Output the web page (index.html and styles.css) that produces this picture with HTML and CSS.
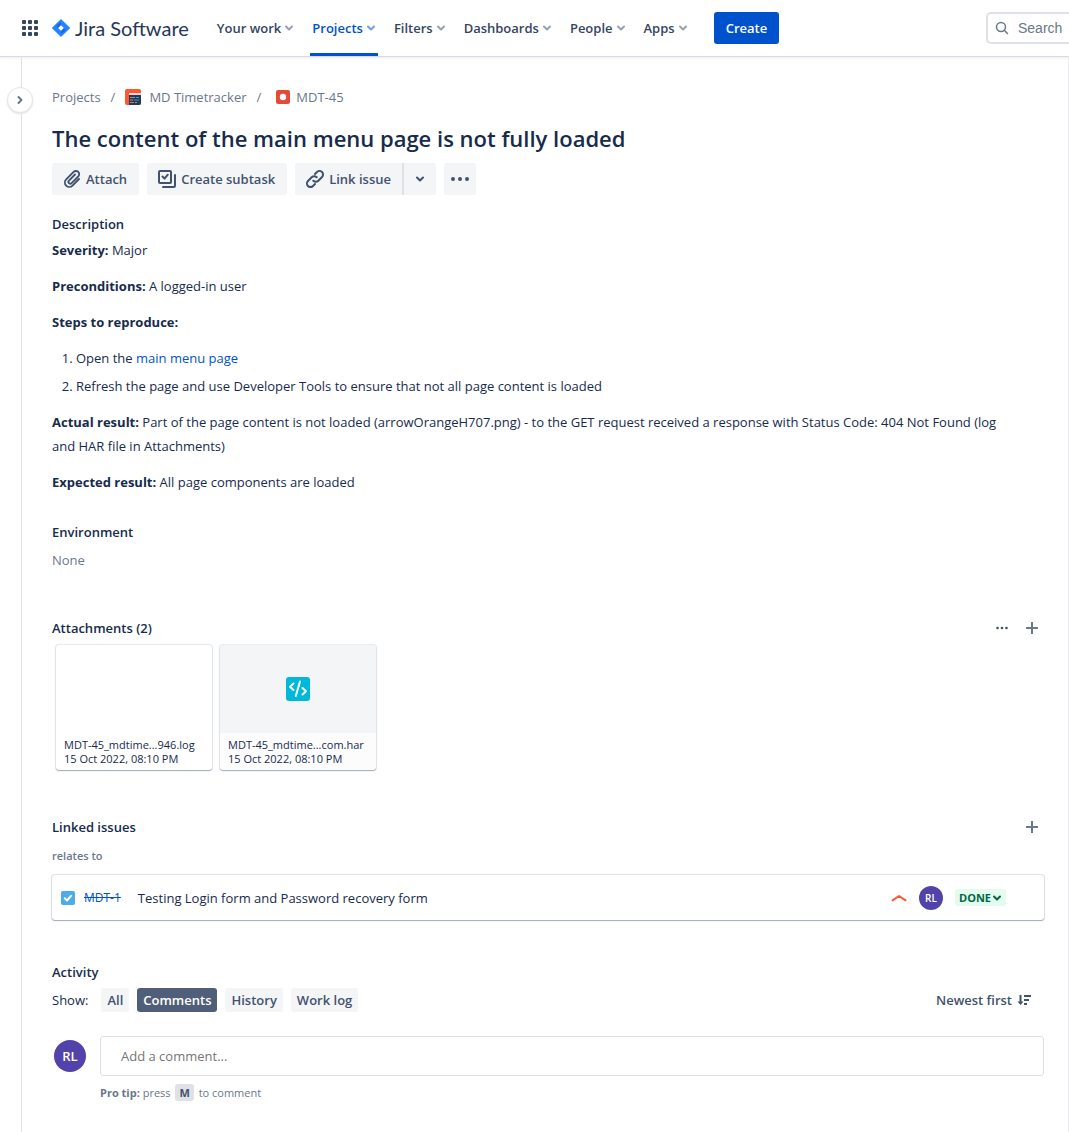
FILE: index.html
```html
<!DOCTYPE html>
<html lang="en">
<head>
<meta charset="utf-8">
<meta name="viewport" content="width=device-width, initial-scale=1">
<title>MDT-45 – Jira Software</title>
<link rel="stylesheet" href="styles.css">
</head>
<body>
<svg class="defs" aria-hidden="true">
  <symbol id="chev" viewBox="0 0 10 10"><path d="M2 3.500 5 6.500 8 3.500" fill="none" stroke="currentColor" stroke-width="2" stroke-linecap="round" stroke-linejoin="round"/></symbol>
  <symbol id="plus" viewBox="0 0 12 12"><path d="M6 0v12M0 6h12" fill="none" stroke="currentColor" stroke-width="2"/></symbol>
</svg>
<header class="topbar">
  <div class="topbar-main">
    <button class="icon-btn switcher" aria-label="Switch to">
      <svg width="16" height="16" viewBox="0 0 16 16" fill="currentColor"><rect width="4" height="4" rx="1"/><rect x="6" width="4" height="4" rx="1"/><rect x="12" width="4" height="4" rx="1"/><rect y="6" width="4" height="4" rx="1"/><rect x="6" y="6" width="4" height="4" rx="1"/><rect x="12" y="6" width="4" height="4" rx="1"/><rect y="12" width="4" height="4" rx="1"/><rect x="6" y="12" width="4" height="4" rx="1"/><rect x="12" y="12" width="4" height="4" rx="1"/></svg>
    </button>
    <a class="logo" href="#">
      <svg width="18" height="18" viewBox="0 0 18 18"><path d="M9 0l8.500 8.200a1.100 1.100 0 0 1 0 1.600L9 18 .5 9.800a1.100 1.100 0 0 1 0-1.600z" fill="#2684ff"/><path d="M9 3v3.300L6.300 9 4.200 6.800z" fill="#1868e0"/><path d="M9 15v-3.300L11.700 9l2.100 2.200z" fill="#1868e0"/><path d="M9 6.200 11.800 9 9 11.800 6.200 9z" fill="#fff"/></svg>
      <span>Jira Software</span>
    </a>
    <nav class="nav" aria-label="Main">
      <button class="nav-item">Your work<svg><use href="#chev"/></svg></button>
      <button class="nav-item is-current">Projects<svg><use href="#chev"/></svg></button>
      <button class="nav-item">Filters<svg><use href="#chev"/></svg></button>
      <button class="nav-item">Dashboards<svg><use href="#chev"/></svg></button>
      <button class="nav-item">People<svg><use href="#chev"/></svg></button>
      <button class="nav-item">Apps<svg><use href="#chev"/></svg></button>
    </nav>
    <button class="create">Create</button>
  </div>
  <label class="search">
    <svg width="14" height="14" viewBox="0 0 14 14" fill="none" stroke="currentColor" stroke-width="1.500" stroke-linecap="round"><circle cx="6" cy="6" r="4.500"/><path d="M9.500 9.500 12.500 12.500"/></svg>
    <input type="text" placeholder="Search" aria-label="Search">
  </label>
</header>

<div class="shell">
  <aside class="rail">
    <button class="expand" aria-label="Expand sidebar"><svg width="10" height="10" viewBox="0 0 10 10"><path d="M3.500 2 6.500 5 3.500 8" fill="none" stroke="currentColor" stroke-width="2" stroke-linecap="round" stroke-linejoin="round"/></svg></button>
  </aside>
  <main class="issue">
    <nav class="crumbs" aria-label="Breadcrumbs">
      <a href="#">Projects</a>
      <span>/</span>
      <a href="#"><svg width="16" height="16" viewBox="0 0 16 16"><rect width="16" height="16" rx="2" fill="#ff5630"/><path d="M4 6h12v8a2 2 0 0 1-2 2H4z" fill="#253858"/><path d="M4 4h12v2H4z" fill="#ffd5c9"/><path d="M5 8.500h5M5 13.500h4" stroke="#8993a4"/><path d="M11 8.500h3M9 11h5" stroke="#2a9fc0"/><path d="M5 11h3M10 13.500h2" stroke="#ff7452"/></svg>MD Timetracker</a>
      <span>/</span>
      <a class="crumb-issue" href="#"><svg width="14" height="14" viewBox="0 0 14 14"><rect width="14" height="14" rx="2" fill="#e5493a"/><circle cx="7" cy="7" r="3.200" fill="#fff"/></svg>MDT-45</a>
    </nav>
    <h1>The content of the main menu page is not fully loaded</h1>
    <div class="actions">
      <button class="btn"><svg width="18" height="18" viewBox="0 0 18 18" fill="none" stroke="currentColor" stroke-width="1.900" stroke-linecap="round"><path d="M12 4.500 6 10.600a1.800 1.800 0 0 0 2.600 2.600L15.200 6.500a3.200 3.200 0 0 0-4.600-4.600L3.200 9.300a4.400 4.400 0 0 0 6.300 6.300L16 9"/></svg>Attach</button>
      <button class="btn"><svg width="18" height="18" viewBox="0 0 18 18" fill="none" stroke="currentColor" stroke-width="2" stroke-linecap="round" stroke-linejoin="round"><rect x="1" y="1" width="12" height="12" rx="1"/><path d="M4.500 6.500 6.500 8.700 9.800 4.700M17 5v10.500a1.500 1.500 0 0 1-1.500 1.500H5"/></svg>Create subtask</button>
      <div class="split">
        <button class="btn"><svg width="18" height="18" viewBox="0 0 18 18" fill="none" stroke="currentColor" stroke-width="2" stroke-linecap="round"><path d="M7.300 10.700a3.500 3.500 0 0 0 5 0L16 7a3.500 3.500 0 0 0-5-5L9 4"/><path d="M10.700 7.300a3.500 3.500 0 0 0-5 0L2 11a3.500 3.500 0 0 0 5 5l2-2"/></svg>Link issue</button>
        <button class="btn square" aria-label="More link options"><svg width="10" height="10"><use href="#chev"/></svg></button>
      </div>
      <button class="btn square" aria-label="More actions"><svg width="18" height="4" viewBox="0 0 18 4" fill="currentColor"><circle cx="2" cy="2" r="2"/><circle cx="9" cy="2" r="2"/><circle cx="16" cy="2" r="2"/></svg></button>
    </div>

    <section class="description">
      <h2>Description</h2>
      <p><strong>Severity:</strong> Major</p>
      <p><strong>Preconditions:</strong> A logged-in user</p>
      <p><strong>Steps to reproduce:</strong></p>
      <ol>
        <li>Open the <a href="#">main menu page</a></li>
        <li>Refresh the page and use Developer Tools to ensure that not all page content is loaded</li>
      </ol>
      <p><strong>Actual result:</strong> Part of the page content is not loaded (arrowOrangeH707.png) - to the GET request received a response with Status Code: 404 Not Found (log and HAR file in Attachments)</p>
      <p><strong>Expected result:</strong> All page components are loaded</p>
    </section>

    <section class="environment">
      <h2>Environment</h2>
      <p>None</p>
    </section>

    <section class="block">
      <div class="block-head">
        <h2>Attachments (2)</h2>
        <button class="icon-btn" aria-label="Attachment options"><svg width="12" height="4" viewBox="0 0 12 4" fill="currentColor"><circle cx="1.500" cy="2" r="1.300"/><circle cx="6" cy="2" r="1.300"/><circle cx="10.500" cy="2" r="1.300"/></svg></button>
        <button class="icon-btn add" aria-label="Add attachment"><svg width="12" height="12"><use href="#plus"/></svg></button>
      </div>
      <div class="files">
        <a class="file" href="#">
          <span class="preview"></span>
          <span class="meta"><span>MDT-45_mdtime...946.log</span><span>15 Oct 2022, 08:10 PM</span></span>
        </a>
        <a class="file file-code" href="#">
          <span class="preview"><svg width="24" height="24" viewBox="0 0 24 24"><rect width="24" height="24" rx="3" fill="#00b8d9"/><path d="M7.500 6.500 4 9.800 7.500 13M14 4.500 9.800 19M16.500 11 20 14.300 16.500 17.500" fill="none" stroke="#fff" stroke-width="2" stroke-linecap="round" stroke-linejoin="round"/></svg></span>
          <span class="meta"><span>MDT-45_mdtime...com.har</span><span>15 Oct 2022, 08:10 PM</span></span>
        </a>
      </div>
    </section>

    <section class="block">
      <div class="block-head">
        <h2>Linked issues</h2>
        <button class="icon-btn add" aria-label="Link an issue"><svg width="12" height="12"><use href="#plus"/></svg></button>
      </div>
      <h3>relates to</h3>
      <div class="linked">
        <svg width="14" height="14" viewBox="0 0 14 14"><rect width="14" height="14" rx="2" fill="#4bade8"/><path d="M3.800 7.300 6 9.500 10.200 4.700" fill="none" stroke="#fff" stroke-width="2" stroke-linecap="round" stroke-linejoin="round"/></svg>
        <a class="key" href="#">MDT-1</a>
        <a class="summary" href="#">Testing Login form and Password recovery form</a>
        <svg width="16" height="8" viewBox="0 0 16 8"><path d="M1.500 6.300 8 2l6.500 4.300" fill="none" stroke="#ff5630" stroke-width="2" stroke-linecap="round" stroke-linejoin="round"/></svg>
        <span class="avatar small">RL</span>
        <button class="status">DONE<svg width="10" height="10"><use href="#chev"/></svg></button>
      </div>
    </section>

    <section class="activity">
      <h2>Activity</h2>
      <div class="filters">
        <span class="show">Show:</span>
        <button class="tab">All</button>
        <button class="tab is-active">Comments</button>
        <button class="tab">History</button>
        <button class="tab">Work log</button>
        <button class="sort">Newest first<svg width="14" height="12" viewBox="0 0 14 12" fill="none" stroke="currentColor" stroke-width="2"><path d="M3.500 1v8M7 2h7M7 6h5M7 10h3"/><path d="M.5 7.500h6L3.500 11z" fill="currentColor" stroke="none"/></svg></button>
      </div>
      <div class="composer">
        <span class="avatar">RL</span>
        <div class="composer-body">
          <input type="text" placeholder="Add a comment..." aria-label="Add a comment">
          <p class="tip"><strong>Pro tip:</strong> press <kbd>M</kbd> to comment</p>
        </div>
      </div>
    </section>
  </main>
</div>
</body>
</html>
```
FILE: styles.css
```css
* { box-sizing: border-box; }

body {
  margin: 0;
  min-height: 100vh;
  display: flex;
  flex-direction: column;
  font: 13px/20px "Open Sans", "Noto Sans", sans-serif;
  color: #172b4d;
  background: #fff;
}

h1, h2, h3, p, ol { margin: 0; }
a { color: inherit; text-decoration: none; }
button, input { font: inherit; color: inherit; }
button { border: 0; padding: 0; background: none; cursor: pointer; white-space: nowrap; }
svg { flex: none; }
.defs { position: absolute; width: 0; height: 0; }

/* Top bar */
.topbar {
  display: flex;
  align-items: center;
  height: 56px;
  box-shadow: 0 1px 1px #d9dae3, 0 2px 3px #f0f0f5;
}
.topbar-main {
  flex: 1;
  align-self: stretch;
  min-width: 0;
  display: flex;
  align-items: center;
  padding-left: 22px;
}
.icon-btn { display: flex; align-items: center; justify-content: center; color: #42526e; }
.switcher { color: #344563; }
.logo {
  display: flex;
  align-items: center;
  gap: 5px;
  margin: 0 26px 0 14px;
  font: 20px/24px Lato, sans-serif;
  color: #253858;
  white-space: nowrap;
}
.nav { display: flex; align-self: stretch; gap: 14px; }
.nav-item {
  display: flex;
  align-items: center;
  gap: 3px;
  padding: 3px 2px 0;
  border-bottom: 3px solid transparent;
  font-weight: 600;
  color: #344563;
}
.nav-item svg { width: 10px; height: 10px; color: #97a0af; }
.nav-item.is-current { color: #0052cc; border-color: #0052cc; }
.nav-item.is-current svg { color: #6f9fe3; }
.create {
  height: 32px;
  margin-left: 24px;
  padding: 0 12px;
  border-radius: 3px;
  background: #0052cc;
  color: #fff;
  font-weight: 600;
}
.search {
  display: flex;
  align-items: center;
  gap: 9px;
  flex: 0 0 83px;
  min-width: 0;
  height: 32px;
  padding-left: 7px;
  border: 2px solid #dfe1e6;
  border-right: 0;
  border-radius: 5px 0 0 5px;
  color: #6b778c;
}
.search input {
  flex: 1;
  width: 0;
  min-width: 0;
  padding: 0;
  border: 0;
  outline: 0;
  background: none;
  font: 14px/20px "Liberation Sans", sans-serif;
}
::placeholder { color: #6b778c; opacity: 1; }

/* Page shell */
.shell { flex: 1; display: flex; }
.rail {
  flex: 0 0 22px;
  width: 22px;
  min-width: 0;
  padding: 31px 0 0 7px;
  box-shadow: inset -1px 0 #e1e2e8;
}
.expand {
  position: relative;
  display: flex;
  align-items: center;
  justify-content: center;
  width: 26px;
  height: 26px;
  border: 1px solid #e4e6ea;
  border-radius: 50%;
  background: #fff;
  color: #6b778c;
  box-shadow: 0 1px 2px #dfe1e6;
}
.issue {
  flex: 1;
  min-width: 0;
  padding: 31px 24px 28px 30px;
  border-right: 1px solid #ebecf0;
}

/* Heading area */
.crumbs { display: flex; gap: 10px; color: #6b778c; }
.crumbs a { display: flex; align-items: center; gap: 8px; }
.crumbs .crumb-issue { gap: 6px; margin-left: 5px; }
h1 { margin-top: 17px; font-size: 22px; line-height: 28px; font-weight: 600; }
.actions { display: flex; gap: 8px; margin-top: 11px; }
.btn {
  display: flex;
  align-items: center;
  justify-content: center;
  gap: 5px;
  height: 32px;
  padding: 0 12px 0 11px;
  border-radius: 3px;
  background: #f4f5f7;
  color: #42526e;
  font-weight: 600;
}
.btn.square { width: 32px; padding: 0; }
.split { display: flex; }
.split .btn:first-child {
  padding-right: 11px;
  border-right: 2px solid #dfe1e6;
  border-radius: 3px 0 0 3px;
}
.split .square { border-radius: 0 3px 3px 0; }

h2 { font-size: 13px; line-height: 20px; font-weight: 600; }

/* Description */
.description { margin-top: 19px; padding-right: 28px; line-height: 24px; }
.description h2 { margin-bottom: 4px; }
.description p + p, .description ol, .description ol + p { margin-top: 12px; }
.description ol { padding-left: 24px; }
.description li + li { margin-top: 4px; }
.description a { color: #0052cc; }

.environment { margin-top: 28px; }
.environment p { margin-top: 8px; color: #6b778c; }

/* Attachments and links */
.block { margin-top: 46px; }
.block + .block { margin-top: 45px; }
.block-head { display: flex; align-items: center; gap: 18px; height: 24px; padding-right: 6px; }
.block-head h2 { margin-right: auto; }
.add { color: #6b778c; }

.files { display: flex; gap: 8px; margin: 5px 4px 0; }
.file {
  width: 156px;
  border-radius: 3px;
  box-shadow: 0 1px 1px #a5adba, 0 0 1px 1px #e6e8ec;
  font-size: 11px;
  line-height: 14px;
  overflow: hidden;
}
.preview { display: flex; align-items: center; justify-content: center; height: 88px; }
.meta { display: flex; flex-direction: column; padding: 5px 8px 4px; }
.file-code { background: #fcfcfd; }
.file-code .preview { background: #f4f5f7; }

h3 { margin-top: 7px; font-size: 11px; line-height: 20px; font-weight: 600; color: #6b778c; }
.linked {
  display: flex;
  align-items: center;
  height: 45px;
  margin-top: 9px;
  padding: 0 38px 0 9px;
  border-radius: 3px;
  box-shadow: 0 1px 1px #a5adba, 0 0 1px 1px #dfe1e6;
}
.key { margin: 0 17px 0 9px; color: #0052cc; font-size: 12px; text-decoration: line-through; }
.summary { flex: 1; min-width: 0; }
.avatar {
  display: flex;
  align-items: center;
  justify-content: center;
  flex: none;
  width: 32px;
  height: 32px;
  border-radius: 50%;
  background: #5243aa;
  color: #fff;
  font-weight: 600;
}
.avatar.small { width: 24px; height: 24px; margin: 0 12px; font-size: 10px; }
.status {
  display: flex;
  align-items: center;
  gap: 1px;
  height: 17px;
  padding: 0 4px;
  border-radius: 3px;
  background: #e3fcef;
  color: #006644;
  font-size: 11px;
  line-height: 16px;
  font-weight: 700;
}

/* Activity */
.activity { margin-top: 42px; }
.filters { display: flex; align-items: center; gap: 8px; margin-top: 6px; }
.show { margin-right: 5px; }
.tab {
  height: 24px;
  padding: 0 6px;
  border-radius: 3px;
  background: #f4f5f7;
  color: #42526e;
  font-weight: 600;
}
.tab.is-active { background: #505f79; color: #fff; }
.sort {
  display: flex;
  align-items: center;
  gap: 5px;
  margin: 0 13px 0 auto;
  color: #42526e;
  font-weight: 600;
}
.composer { display: flex; gap: 14px; margin-top: 24px; padding-left: 2px; }
.composer .avatar { margin-top: 4px; }
.composer-body { flex: 1; min-width: 0; }
.composer input {
  display: block;
  width: 100%;
  height: 40px;
  padding: 0 20px;
  border: 1px solid #dfe1e6;
  border-radius: 3px;
}
.composer ::placeholder { color: #757575; }
.tip { margin-top: 7px; font-size: 11px; color: #6b778c; }
kbd {
  margin: 0 2px;
  padding: 1px 4px;
  border-radius: 3px;
  background: #dfe1e6;
  color: #42526e;
  font: inherit;
  font-weight: 700;
}
```
